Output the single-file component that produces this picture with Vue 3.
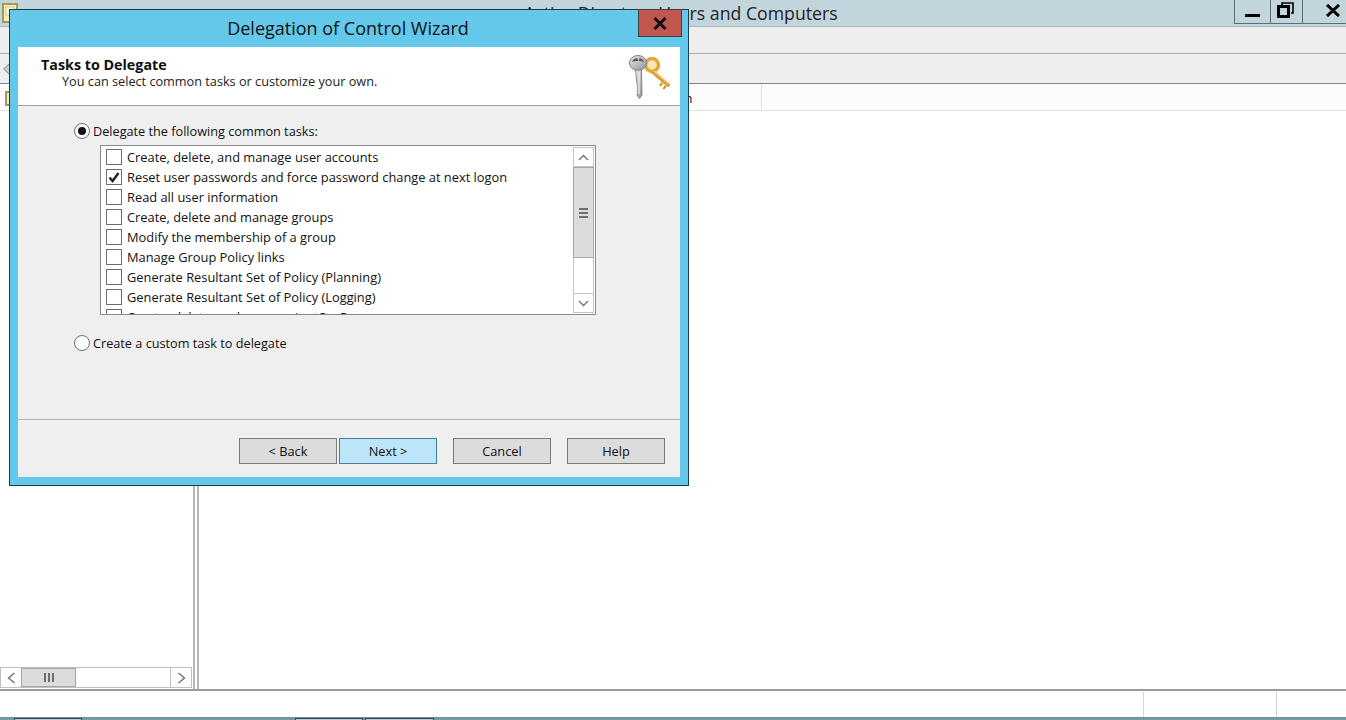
<script setup>
const tasks = [
  { label: 'Create, delete, and manage user accounts', checked: false },
  { label: 'Reset user passwords and force password change at next logon', checked: true },
  { label: 'Read all user information', checked: false },
  { label: 'Create, delete and manage groups', checked: false },
  { label: 'Modify the membership of a group', checked: false },
  { label: 'Manage Group Policy links', checked: false },
  { label: 'Generate Resultant Set of Policy (Planning)', checked: false },
  { label: 'Generate Resultant Set of Policy (Logging)', checked: false },
  { label: 'Create, delete, and manage inetOrgPerson', checked: false }
]
</script>

<template>
  <div class="app">
    <header class="titlebar">
      <svg class="folder" width="16" height="20" viewBox="0 0 16 20">
        <rect x="1" y="1" width="14" height="18" fill="#f5edb8" stroke="#a8975a" stroke-width="2" />
        <rect x="4" y="4" width="8" height="8" fill="#fdfbe6" stroke="#d3c27f" />
      </svg>
      <span class="apptitle">Active Directory Users and Computers</span>
      <div class="winbtns">
        <div class="wb wb-min"><svg width="16" height="12" viewBox="0 0 16 12"><rect x="0" y="8" width="15" height="3" fill="#000" /></svg></div>
        <div class="wb wb-max"><svg width="17" height="16" viewBox="0 0 17 16" fill="none" stroke="#000"><path d="M5 3V1h11v10h-2" stroke-width="1.6" /><rect x="1.5" y="4.5" width="10" height="10" stroke-width="3" /></svg></div>
        <div class="wb wb-close"><svg width="14" height="13" viewBox="0 0 14 13" fill="none" stroke="#000" stroke-width="3"><path d="M1 1l12 11M13 1L1 12" /></svg></div>
      </div>
    </header>
    <div class="menubar"></div>
    <div class="toolbar">
      <svg class="backarrow" width="7" height="12" viewBox="0 0 7 12"><path d="M6.5 0.5L0.5 6l6 5.5z" fill="#c9c9c9" stroke="#8f8f8f" /></svg>
    </div>
    <div class="tabrow">
      <div class="tree-head">
        <svg width="10" height="15" viewBox="0 0 10 15"><rect x="1" y="1" width="8" height="13" fill="#f5edb8" stroke="#a8975a" stroke-width="2" /></svg>
      </div>
      <div class="tab"><span class="tabtext">Description</span></div>
    </div>
    <main class="panes">
      <aside class="leftpane">
        <div class="hscroll">
          <div class="hs-btn"><svg width="9" height="12" viewBox="0 0 9 12" fill="none" stroke="#707070" stroke-width="1.4"><path d="M7.5 1L1.5 6l6 5" /></svg></div>
          <div class="hs-thumb"><i></i><i></i><i></i></div>
          <div class="hs-track"></div>
          <div class="hs-btn hs-right"><svg width="9" height="12" viewBox="0 0 9 12" fill="none" stroke="#707070" stroke-width="1.4"><path d="M1.5 1l6 5-6 5" /></svg></div>
        </div>
      </aside>
      <section class="rightpane"></section>
    </main>
    <footer class="statusbar">
      <div class="cell cell-main"></div>
      <div class="cell cell-mid"></div>
      <div class="cell cell-end"></div>
    </footer>
    <div class="taskbar">
      <span class="tb tb1"></span><span class="tb tb2"></span><span class="tb tb3"></span>
    </div>

    <div class="dialog">
      <div class="dlg-title">
        <span>Delegation of Control Wizard</span>
        <div class="dlg-close"><svg width="14" height="13" viewBox="0 0 14 13" fill="none" stroke="#111" stroke-width="3"><path d="M1.5 1l11 11M12.5 1l-11 11" /></svg></div>
      </div>
      <div class="client">
        <div class="dlg-head">
          <div class="head-text">
            <h1>Tasks to Delegate</h1>
            <p>You can select common tasks or customize your own.</p>
          </div>
          <svg class="keys" width="44" height="46" viewBox="0 0 44 46">
            <defs>
              <linearGradient id="silver" x1="0" y1="0" x2="1" y2="1">
                <stop offset="0" stop-color="#eceded" />
                <stop offset="1" stop-color="#8d9098" />
              </linearGradient>
            </defs>
            <circle cx="26" cy="10" r="6.5" fill="#f7e6b4" stroke="#e2a93a" stroke-width="3.5" />
            <path d="M27 17l15 13" stroke="#dfa02e" stroke-width="4" stroke-linecap="round" />
            <path d="M28 16l14 12" stroke="#f5d27c" stroke-width="1.2" />
            <path d="M36 28l-2 3M39.500 31l-2 3" stroke="#c08620" stroke-width="2" />
            <ellipse cx="12" cy="8" rx="8.500" ry="7.500" fill="url(#silver)" stroke="#7b7f87" stroke-width="1" />
            <path d="M6 7c1-3 3-4 6-4s5 1 6 4c-2-1-3-1-6-1s-4 0-6 1z" fill="#555a62" />
            <path d="M11 3h2.500l-.7 4z" fill="#e6c06a" />
            <path d="M9.500 15h6l.5 25-2.500 3.500-2-2.500-.5-2 1-1.500-1-1.500 1-1.500-1-2 1-1.500-1-2z" fill="url(#silver)" stroke="#6f737b" stroke-width="0.8" />
            <path d="M13 17v22" stroke="#f0f0f1" stroke-width="1.200" />
          </svg>
        </div>
        <div class="dlg-body">
          <label class="radio-row">
            <span class="radio radio-on"></span>
            <span class="radio-text">Delegate the following common tasks:</span>
          </label>
          <div class="listbox">
            <ul class="items">
              <li v-for="t in tasks" :key="t.label" class="item">
                <span class="check">
                  <svg v-if="t.checked" width="12" height="11" viewBox="0 0 12 11" fill="none" stroke="#222" stroke-width="2.4"><path d="M1.500 5.500L4.600 9 10.500 1" /></svg>
                </span>
                <span>{{ t.label }}</span>
              </li>
            </ul>
            <div class="vscroll">
              <div class="vs-btn"><svg width="11" height="7" viewBox="0 0 11 7" fill="none" stroke="#707070" stroke-width="1.3"><path d="M1 6l4.500-4.500L10 6" /></svg></div>
              <div class="vs-thumb"><i></i><i></i><i></i></div>
              <div class="vs-track"></div>
              <div class="vs-btn"><svg width="11" height="7" viewBox="0 0 11 7" fill="none" stroke="#707070" stroke-width="1.3"><path d="M1 1l4.500 4.500L10 1" /></svg></div>
            </div>
          </div>
          <label class="radio-row radio-second">
            <span class="radio"></span>
            <span class="radio-text">Create a custom task to delegate</span>
          </label>
        </div>
        <div class="dlg-foot">
          <button class="btn">&lt; Back</button>
          <button class="btn btn-next">Next &gt;</button>
          <button class="btn btn-cancel">Cancel</button>
          <button class="btn btn-help">Help</button>
        </div>
      </div>
    </div>
  </div>
</template>

<style>
html, body { margin: 0; background: #fff; overflow: hidden; }
</style>

<style scoped>
.app {
  position: relative;
  width: 1346px;
  height: 720px;
  overflow: hidden;
  display: flex;
  flex-direction: column;
  background: #fff;
  font-family: "Open Sans", "Liberation Sans", sans-serif;
  color: #111;
}
.titlebar {
  height: 26px;
  flex: none;
  background: #c3d5dc;
  border-bottom: 1px solid #a9b6bb;
  display: flex;
  align-items: flex-start;
  position: relative;
}
.folder { margin: 3px 0 0 2px; position: relative; }
.apptitle {
  position: absolute;
  left: 524px;
  top: 1px;
  font-size: 17.7px;
  line-height: 24px;
  white-space: nowrap;
  color: #222;
}
.winbtns {
  margin-left: auto;
  display: flex;
  height: 23px;
  border-left: 1px solid #5d6d75;
  border-bottom: 1px solid #5d6d75;
}
.wb { display: flex; align-items: center; height: 23px; justify-content: center; border-right: 1px solid #5d6d75; }
.wb-min { width: 35px; }
.wb-max { width: 32px; padding-bottom: 3px; padding-right: 2px; box-sizing: border-box; }
.wb-close { width: 43px; border-right: 0; padding: 0 0 3px 16px; box-sizing: border-box; }
.menubar {
  height: 26px;
  flex: none;
  background: #eeeeee;
  border-bottom: 1px solid #aaadae;
}
.toolbar {
  height: 29px;
  flex: none;
  background: #eeeeee;
  border-bottom: 1px solid #7f848b;
  display: flex;
  align-items: center;
  padding-left: 3px;
}
.tabrow {
  height: 26px;
  flex: none;
  background: #fcfcfc;
  border-bottom: 1px solid #e0e0e0;
  display: flex;
}
.tree-head { width: 198px; padding: 5px 0 0 5px; box-sizing: border-box; }
.tab {
  width: 564px;
  box-sizing: border-box;
  border-right: 1px solid #e0e0e0;
  padding-left: 425px;
}
.tabtext { font-size: 13px; line-height: 29px; }
.panes { flex: 1; display: flex; min-height: 0; border-bottom: 2px solid #9a9a9a; }
.leftpane {
  width: 195px;
  box-sizing: border-box;
  border-right: 2px solid #b5b5b5;
  display: flex;
  flex-direction: column;
  justify-content: flex-end;
  padding-bottom: 1px;
}
.rightpane { flex: 1; margin-left: 2px; border-left: 2px solid #b5b5b5; }
.hscroll {
  height: 21px;
  display: flex;
  border: 1px solid #c0c0c0;
  box-sizing: border-box;
  background: #fff;
  margin-right: 1px;
}
.hs-btn { width: 20px; display: flex; align-items: center; justify-content: center; }
.hs-right { border-left: 1px solid #c0c0c0; }
.hs-thumb {
  width: 55px;
  box-sizing: border-box;
  background: #dcdcdc;
  border: 1px solid #a6a6a6;
  display: flex;
  align-items: center;
  justify-content: center;
  gap: 2px;
}
.hs-thumb i { width: 2px; height: 9px; background: #6e6e6e; }
.hs-track { flex: 1; }
.statusbar { height: 26px; flex: none; display: flex; background: #fff; padding-top: 1px; box-sizing: border-box; }
.cell { box-sizing: border-box; }
.cell-main { width: 1144px; border-right: 1px solid #d4d4d4; }
.cell-mid { width: 133px; border-right: 1px solid #d4d4d4; }
.cell-end { flex: 1; }
.taskbar {
  height: 3px;
  flex: none;
  background: #6d9cae;
  border-top: 1px solid #7f8a90;
  box-sizing: border-box;
  display: flex;
}
.tb { height: 2px; box-sizing: border-box; border: 1px solid #2e4a55; border-bottom: 0; background: #b5cdd6; }
.tb1 { width: 68px; margin-left: 14px; }
.tb2 { width: 68px; margin-left: 213px; }
.tb3 { width: 69px; margin-left: 2px; }

.dialog {
  position: absolute;
  left: 9px;
  top: 9px;
  width: 680px;
  height: 477px;
  box-sizing: border-box;
  background: #64c8ea;
  border: 1px solid #1c3e4c;
  display: flex;
  flex-direction: column;
  padding: 0 8px 8px 8px;
}
.dlg-title {
  height: 37px;
  flex: none;
  position: relative;
  display: flex;
  align-items: center;
  justify-content: center;
  font-size: 18px;
  color: #111;
}
.dlg-title span { padding: 0 2px 2px 0; }
.dlg-close {
  position: absolute;
  right: -2px;
  top: -1px;
  width: 44px;
  height: 28px;
  box-sizing: border-box;
  background: #c0584f;
  border: 1px solid #3a4448;
  display: flex;
  align-items: center;
  justify-content: center;
}
.client {
  flex: 1;
  display: flex;
  flex-direction: column;
  background: #efefef;
  min-height: 0;
}
.dlg-head {
  height: 59px;
  flex: none;
  box-sizing: border-box;
  background: #fff;
  border-bottom: 1px solid #a0a0a0;
  display: flex;
  justify-content: space-between;
  padding: 8px 10px 0 23px;
}
.head-text h1 { margin: 2px 0 0; font-size: 14.3px; line-height: 16px; font-weight: 700; color: #111; }
.head-text p { margin: 0 0 0 21px; font-size: 12.7px; line-height: 17px; color: #222; }
.dlg-body { flex: 1; padding: 16px 0 0 56px; box-sizing: border-box; min-height: 0; border-bottom: 1px solid #b5b5b5; }
.radio-row { display: flex; align-items: center; gap: 3px; height: 18px; font-size: 12.7px; line-height: 18px; }
.radio-text { padding-bottom: 1px; }
.radio-second { margin-top: 19px; }
.radio {
  width: 16px;
  height: 16px;
  box-sizing: border-box;
  border-radius: 50%;
  border: 1px solid #6e6e6e;
  background: #fff;
  display: flex;
  align-items: center;
  justify-content: center;
  flex: none;
}
.radio-on::after { content: ""; width: 8px; height: 8px; border-radius: 50%; background: #111; }
.listbox {
  margin: 5px 0 0 26px;
  width: 496px;
  height: 170px;
  box-sizing: border-box;
  border: 1px solid #8a8a8a;
  background: #fff;
  display: flex;
  overflow: hidden;
}
.items { flex: 1; list-style: none; margin: 0; padding: 1px 0 0 5px; overflow: hidden; }
.item { height: 20px; display: flex; align-items: center; gap: 5px; font-size: 12.85px; white-space: nowrap; }
.check {
  width: 16px;
  height: 16px;
  box-sizing: border-box;
  border: 1px solid #6e6e6e;
  background: #fff;
  display: flex;
  align-items: center;
  justify-content: center;
  flex: none;
}
.vscroll { width: 21px; flex: none; margin: 1px 1px 1px 0; display: flex; flex-direction: column; border-left: 1px solid #c4c4c4; border-right: 1px solid #c4c4c4; box-sizing: border-box; }
.vs-btn { height: 20px; flex: none; display: flex; align-items: center; justify-content: center; border-top: 1px solid #c4c4c4; border-bottom: 1px solid #c4c4c4; box-sizing: border-box; }
.vs-thumb {
  height: 91px;
  flex: none;
  margin: 0 -1px;
  box-sizing: border-box;
  background: #dcdcdc;
  border: 1px solid #a6a6a6;
  display: flex;
  flex-direction: column;
  align-items: center;
  justify-content: center;
  gap: 2px;
}
.vs-thumb i { width: 9px; height: 2px; background: #6e6e6e; }
.vs-track { flex: 1; }
.dlg-foot {
  height: 57px;
  flex: none;
  box-sizing: border-box;
  display: flex;
  padding: 18px 0 0 221px;
}
.btn {
  width: 98px;
  height: 26px;
  box-sizing: border-box;
  border: 1px solid #7a7a7a;
  background: #dcdcdc;
  color: #111;
  font-family: inherit;
  font-size: 12.8px;
  padding: 0;
}
.btn-next { margin-left: 2px; background: #bde4f9; border-color: #3f7ea6; }
.btn-cancel, .btn-help { margin-left: 16px; }
</style>
